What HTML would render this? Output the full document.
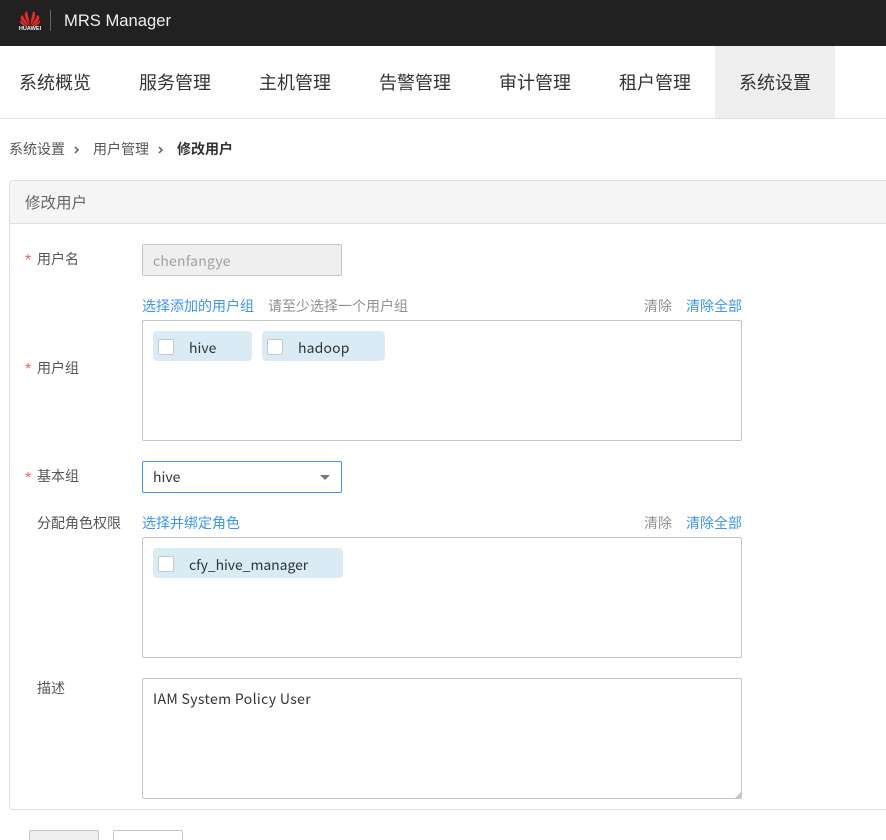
<!DOCTYPE html>
<html lang="zh-CN">
<head>
<meta charset="utf-8">
<title>MRS Manager</title>
<style>
html,body{margin:0;padding:0;background:#fff;width:886px;height:840px;overflow:hidden}
#w{position:relative;width:886px;height:840px;overflow:hidden;font-family:"Noto Sans CJK SC","Liberation Sans",sans-serif;font-size:14px;color:#333}
.a{position:absolute;white-space:nowrap;line-height:20px}
.box{position:absolute;box-sizing:border-box;border:1px solid #c4c4c4;border-radius:2px;background:#fff}
.blue{color:#3d94f2;font-size:14px}
.gray{color:#909090}
.lab{color:#555}
.star{color:#f5606a;font-family:"Liberation Sans",sans-serif;font-size:16px}
.nav{position:absolute;top:70px;font-size:18px;line-height:24px;color:#333;white-space:nowrap}
.chip{position:absolute;height:30px;background:#d9ecf5;border-radius:4px}
.chip i{position:absolute;left:5px;top:8px;width:16px;height:16px;box-sizing:border-box;background:#fff;border:1px solid #c8c8c8;border-radius:2px}
.chip span{position:absolute;left:36px;top:7px;line-height:20px;font-size:14px;color:#333;white-space:nowrap}
</style>
</head>
<body>
<div id="w">
<div style="position:absolute;left:0;top:0;width:886px;height:46px;background:#212121"></div>
<svg style="position:absolute;left:19px;top:10px" width="22" height="17" viewBox="0 0 24 18">
<g fill="#e8292b">
<path d="M11.5 17 C11.2 12 10.2 6 8.6 1 C6.8 1.8 6 3.6 6.4 5.6 C7 9.4 9.6 14 11.5 17Z"/>
<path d="M12.5 17 C12.8 12 13.8 6 15.4 1 C17.2 1.8 18 3.6 17.6 5.6 C17 9.4 14.4 14 12.5 17Z"/>
<path d="M10.8 17 C8.6 13.4 6 9.6 3.6 5 C1.8 6.2 1.4 8.2 2.2 10 C3.6 13 7.6 15.6 10.8 17Z"/>
<path d="M13.2 17 C15.4 13.4 18 9.6 20.4 5 C22.2 6.2 22.6 8.2 21.8 10 C20.4 13 16.4 15.6 13.2 17Z"/>
<path d="M10 17.3 C7 15.6 4 13.4 1 10.8 C0.8 12.8 1.4 14.2 3 15.4 C5 16.8 7.4 17.4 10 17.3Z"/>
<path d="M14 17.3 C17 15.6 20 13.4 23 10.8 C23.2 12.8 22.6 14.2 21 15.4 C19 16.8 16.6 17.4 14 17.3Z"/>
</g>
</svg>
<div class="a" style="left:14px;top:26px;width:32px;font:bold 5.6px/6px 'Liberation Sans',sans-serif;color:#f2f2f2;text-align:center">HUAWEI</div>
<div style="position:absolute;left:50px;top:10px;width:1px;height:21px;background:#666"></div>
<div class="a" style="left:64px;top:9px;font-size:16.6px;line-height:24px;color:#f0f0f0;font-family:'Liberation Sans',sans-serif">MRS Manager</div>

<div style="position:absolute;left:0;top:118px;width:886px;height:1px;background:#e2e2e2"></div>
<div style="position:absolute;left:715px;top:46px;width:120px;height:72px;background:#eeeeee"></div>
<div class="nav" style="left:19px">系统概览</div>
<div class="nav" style="left:139px">服务管理</div>
<div class="nav" style="left:259px">主机管理</div>
<div class="nav" style="left:379px">告警管理</div>
<div class="nav" style="left:499px">审计管理</div>
<div class="nav" style="left:619px">租户管理</div>
<div class="nav" style="left:739px">系统设置</div>

<div class="a lab" style="left:9px;top:139px">系统设置</div>
<div class="a" style="left:93px;top:139px;color:#555">用户管理</div>
<div class="a" style="left:177px;top:139px;font-weight:bold;color:#333">修改用户</div>
<svg style="position:absolute;left:73px;top:145px" width="8" height="10" viewBox="0 0 8 10"><path d="M2 2 L5 5 L2 8" fill="none" stroke="#4a6178" stroke-width="1.5"/></svg>
<svg style="position:absolute;left:157px;top:145px" width="8" height="10" viewBox="0 0 8 10"><path d="M2 2 L5 5 L2 8" fill="none" stroke="#4a6178" stroke-width="1.5"/></svg>

<div style="position:absolute;left:9px;top:180px;width:900px;height:630px;box-sizing:border-box;border:1px solid #dfdfdf;border-radius:4px;background:#fff"></div>
<div style="position:absolute;left:10px;top:181px;width:890px;height:42px;background:#f5f5f5;border-bottom:1px solid #dfdfdf;border-radius:3px 0 0 0"></div>
<div class="a" style="left:25px;top:191px;font-size:15.5px;line-height:22px;color:#666">修改用户</div>

<div class="a star" style="left:25px;top:251px">*</div>
<div class="a lab" style="left:37px;top:249px">用户名</div>
<div class="box" style="left:142px;top:244px;width:200px;height:32px;background:#efefef"></div>
<div class="a" style="left:153px;top:251px;color:#a0a0a0;letter-spacing:.2px">chenfangye</div>

<div class="a blue" style="left:142px;top:296px">选择添加的用户组</div>
<div class="a gray" style="left:268px;top:296px">请至少选择一个用户组</div>
<div class="a gray" style="left:644px;top:296px">清除</div>
<div class="a blue" style="left:686px;top:296px">清除全部</div>
<div class="a star" style="left:25px;top:360px">*</div>
<div class="a lab" style="left:37px;top:358px">用户组</div>
<div class="box" style="left:142px;top:320px;width:600px;height:121px"></div>
<div class="chip" style="left:153px;top:331px;width:99px"><i></i><span>hive</span></div>
<div class="chip" style="left:262px;top:331px;width:123px"><i></i><span style="letter-spacing:.15px">hadoop</span></div>

<div class="a star" style="left:25px;top:469px">*</div>
<div class="a lab" style="left:37px;top:466px">基本组</div>
<div class="box" style="left:142px;top:461px;width:200px;height:32px;border-color:#3d94f2"></div>
<div class="a" style="left:153px;top:467px">hive</div>
<div style="position:absolute;left:320px;top:475px;width:0;height:0;border-left:5px solid transparent;border-right:5px solid transparent;border-top:5px solid #777"></div>

<div class="a lab" style="left:37px;top:513px">分配角色权限</div>
<div class="a blue" style="left:142px;top:513px">选择并绑定角色</div>
<div class="a gray" style="left:644px;top:513px">清除</div>
<div class="a blue" style="left:686px;top:513px">清除全部</div>
<div class="box" style="left:142px;top:537px;width:600px;height:121px"></div>
<div class="chip" style="left:153px;top:548px;width:190px"><i></i><span style="letter-spacing:-.06px">cfy_hive_manager</span></div>

<div class="a lab" style="left:37px;top:678px">描述</div>
<div class="box" style="left:142px;top:678px;width:600px;height:121px"></div>
<div class="a" style="left:153px;top:689px;letter-spacing:.36px">IAM System Policy User</div>
<svg style="position:absolute;left:734px;top:791px" width="8" height="8" viewBox="0 0 8 8"><path d="M7 1 V7 H1Z" fill="#c8c8c8"/></svg>

<div class="box" style="left:29px;top:830px;width:70px;height:30px;background:#efefef"></div>
<div class="box" style="left:113px;top:830px;width:70px;height:30px"></div>
</div>
</body>
</html>
